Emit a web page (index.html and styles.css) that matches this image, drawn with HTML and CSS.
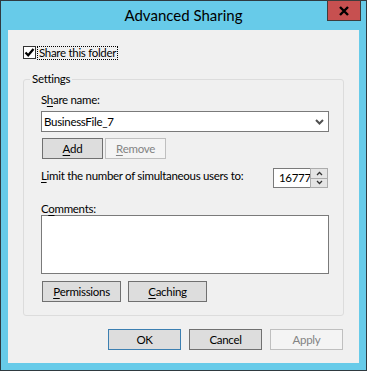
FILE: index.html
```html
<!DOCTYPE html>
<html lang="en">
<head>
    <meta charset="UTF-8">
    <title>Advanced Sharing</title>
    <link rel="stylesheet" href="styles.css">
</head>
<body>
    <div class="window">
        <div class="titlebar">
            <span></span>
            <div class="title">Advanced Sharing</div>
            <div class="close">
                <svg width="10" height="10" viewBox="0 0 10 10"><path d="M1 1L9 9M9 1L1 9" stroke="#000" stroke-width="2.4"/></svg>
            </div>
        </div>

        <div class="client">
            <div class="check-row">
                <span class="checkbox">
                    <svg width="11" height="11" viewBox="0 0 11 11"><path d="M1.5 5.5L4.2 8.3L9.5 2" fill="none" stroke="#000" stroke-width="2.2"/></svg>
                </span>
                <span class="focus">Share this folder</span>
            </div>

            <fieldset class="group">
                <legend>Settings</legend>
                <div class="label">S<u>h</u>are name:</div>
                <div class="combo">
                    <span>BusinessFile_7</span>
                    <svg width="9" height="6" viewBox="0 0 9 6"><path d="M1 1L4.5 4.5L8 1" fill="none" stroke="#505050" stroke-width="2"/></svg>
                </div>
                <div class="btn-row">
                    <div class="btn small"><u>A</u>dd</div>
                    <div class="btn small disabled"><u>R</u>emove</div>
                </div>
                <div class="limit-row">
                    <span class="limit-label"><u>L</u>imit the number of simultaneous users to:</span>
                    <div class="spin">
                        <div class="spin-text">16777</div>
                        <div class="spin-btns">
                            <div class="spin-btn"><svg width="7" height="5" viewBox="0 0 7 5"><path d="M1 4L3.5 1.5L6 4" fill="none" stroke="#333" stroke-width="1.3"/></svg></div>
                            <div class="spin-btn"><svg width="7" height="5" viewBox="0 0 7 5"><path d="M1 1L3.5 3.5L6 1" fill="none" stroke="#333" stroke-width="1.3"/></svg></div>
                        </div>
                    </div>
                </div>
                <div class="label comments-label">C<u>o</u>mments:</div>
                <div class="textarea"></div>
                <div class="btn-row perm-row">
                    <div class="btn medium"><u>P</u>ermissions</div>
                    <div class="btn medium"><u>C</u>aching</div>
                </div>
            </fieldset>

            <div class="dialog-buttons">
                <div class="btn wide default">OK</div>
                <div class="btn wide">Cancel</div>
                <div class="btn wide disabled">Apply</div>
            </div>
        </div>
    </div>
</body>
</html>
```

FILE: styles.css
```css
body {
    margin: 0;
    font-family: Lato, "Liberation Sans", sans-serif;
    font-size: 11.5px;
    letter-spacing: -0.3px;
    color: #000;
    background-color: #fff;
}
u {
    text-decoration-thickness: 1px;
    text-underline-offset: 2px;
}
.window {
    width: 367px;
    height: 371px;
    box-sizing: border-box;
    border: 1px solid #2f3a40;
    background-color: #67cbe9;
    display: flex;
    flex-direction: column;
}
.titlebar {
    height: 29px;
    display: grid;
    grid-template-columns: 1fr auto 1fr;
}
.title {
    font-size: 15px;
    letter-spacing: 0;
    line-height: 29px;
}
.close {
    justify-self: end;
    align-self: start;
    width: 34px;
    height: 21px;
    margin-top: -1px;
    margin-right: 5px;
    box-sizing: border-box;
    border: 1px solid #3d3d3d;
    background-color: #c75050;
    display: flex;
    justify-content: center;
    align-items: center;
}
.client {
    height: 333px;
    margin: 0 7px;
    box-sizing: border-box;
    padding: 14px 15px 13px;
    background-color: #f0f0f0;
}
.check-row {
    height: 17px;
    display: flex;
    align-items: center;
}
.checkbox {
    width: 13px;
    height: 13px;
    box-sizing: border-box;
    border: 1px solid #333;
    background-color: #fff;
    display: flex;
    justify-content: center;
    align-items: center;
}
.focus {
    margin-left: 1px;
    padding: 0 1px;
    line-height: 12px;
    border: 1px dotted #000;
}
.group {
    margin: 10px 0 0;
    padding: 0 14px 13px 17px;
    border: 1px solid #dcdcdc;
    border-radius: 3px;
    box-sizing: border-box;
    width: 321px;
}
.group legend {
    margin-left: -11px;
    padding: 0 2px;
    line-height: 16px;
}
.label {
    margin-top: 5px;
    line-height: 16px;
}
.combo {
    margin-top: 3px;
    height: 21px;
    box-sizing: border-box;
    border: 1px solid #7a7a7a;
    background-color: #fff;
    display: flex;
    justify-content: space-between;
    align-items: center;
    padding: 0 4px 0 2px;
}
.btn-row {
    margin-top: 6px;
    margin-left: 1px;
    display: flex;
    gap: 2px;
}
.btn {
    height: 21px;
    box-sizing: border-box;
    border: 1px solid #707070;
    background-color: #dddddd;
    display: flex;
    justify-content: center;
    align-items: center;
}
.btn.small {
    width: 61px;
}
.btn.medium {
    width: 79px;
}
.btn.wide {
    width: 73px;
}
.btn.disabled {
    border-color: #bfbfbf;
    background-color: #f4f4f4;
    color: #838383;
}
.btn.default {
    border-color: #3c7fb1;
}
.limit-row {
    margin-top: 9px;
    display: flex;
    justify-content: space-between;
    align-items: flex-start;
}
.limit-label {
    line-height: 16px;
}
.spin {
    height: 20px;
    display: flex;
    margin-right: 1px;
}
.spin-text {
    width: 37px;
    box-sizing: border-box;
    border: 1px solid #7a7a7a;
    border-right: none;
    background-color: #fff;
    padding-left: 5px;
    line-height: 18px;
    overflow: hidden;
    white-space: nowrap;
}
.spin-btns {
    width: 18px;
    display: flex;
    flex-direction: column;
}
.spin-btn {
    flex: 1;
    box-sizing: border-box;
    border: 1px solid #acacac;
    background-color: #e5e5e5;
    display: flex;
    justify-content: center;
    align-items: center;
}
.spin-btn + .spin-btn {
    border-top: none;
}
.comments-label {
    margin-top: 14px;
    line-height: 13px;
}
.textarea {
    height: 59px;
    box-sizing: border-box;
    border: 1px solid #7a7a7a;
    background-color: #fff;
}
.perm-row {
    margin-top: 7px;
    gap: 7px;
}
.dialog-buttons {
    margin-top: 13px;
    padding-right: 1px;
    display: flex;
    justify-content: flex-end;
    gap: 8px;
}
```
